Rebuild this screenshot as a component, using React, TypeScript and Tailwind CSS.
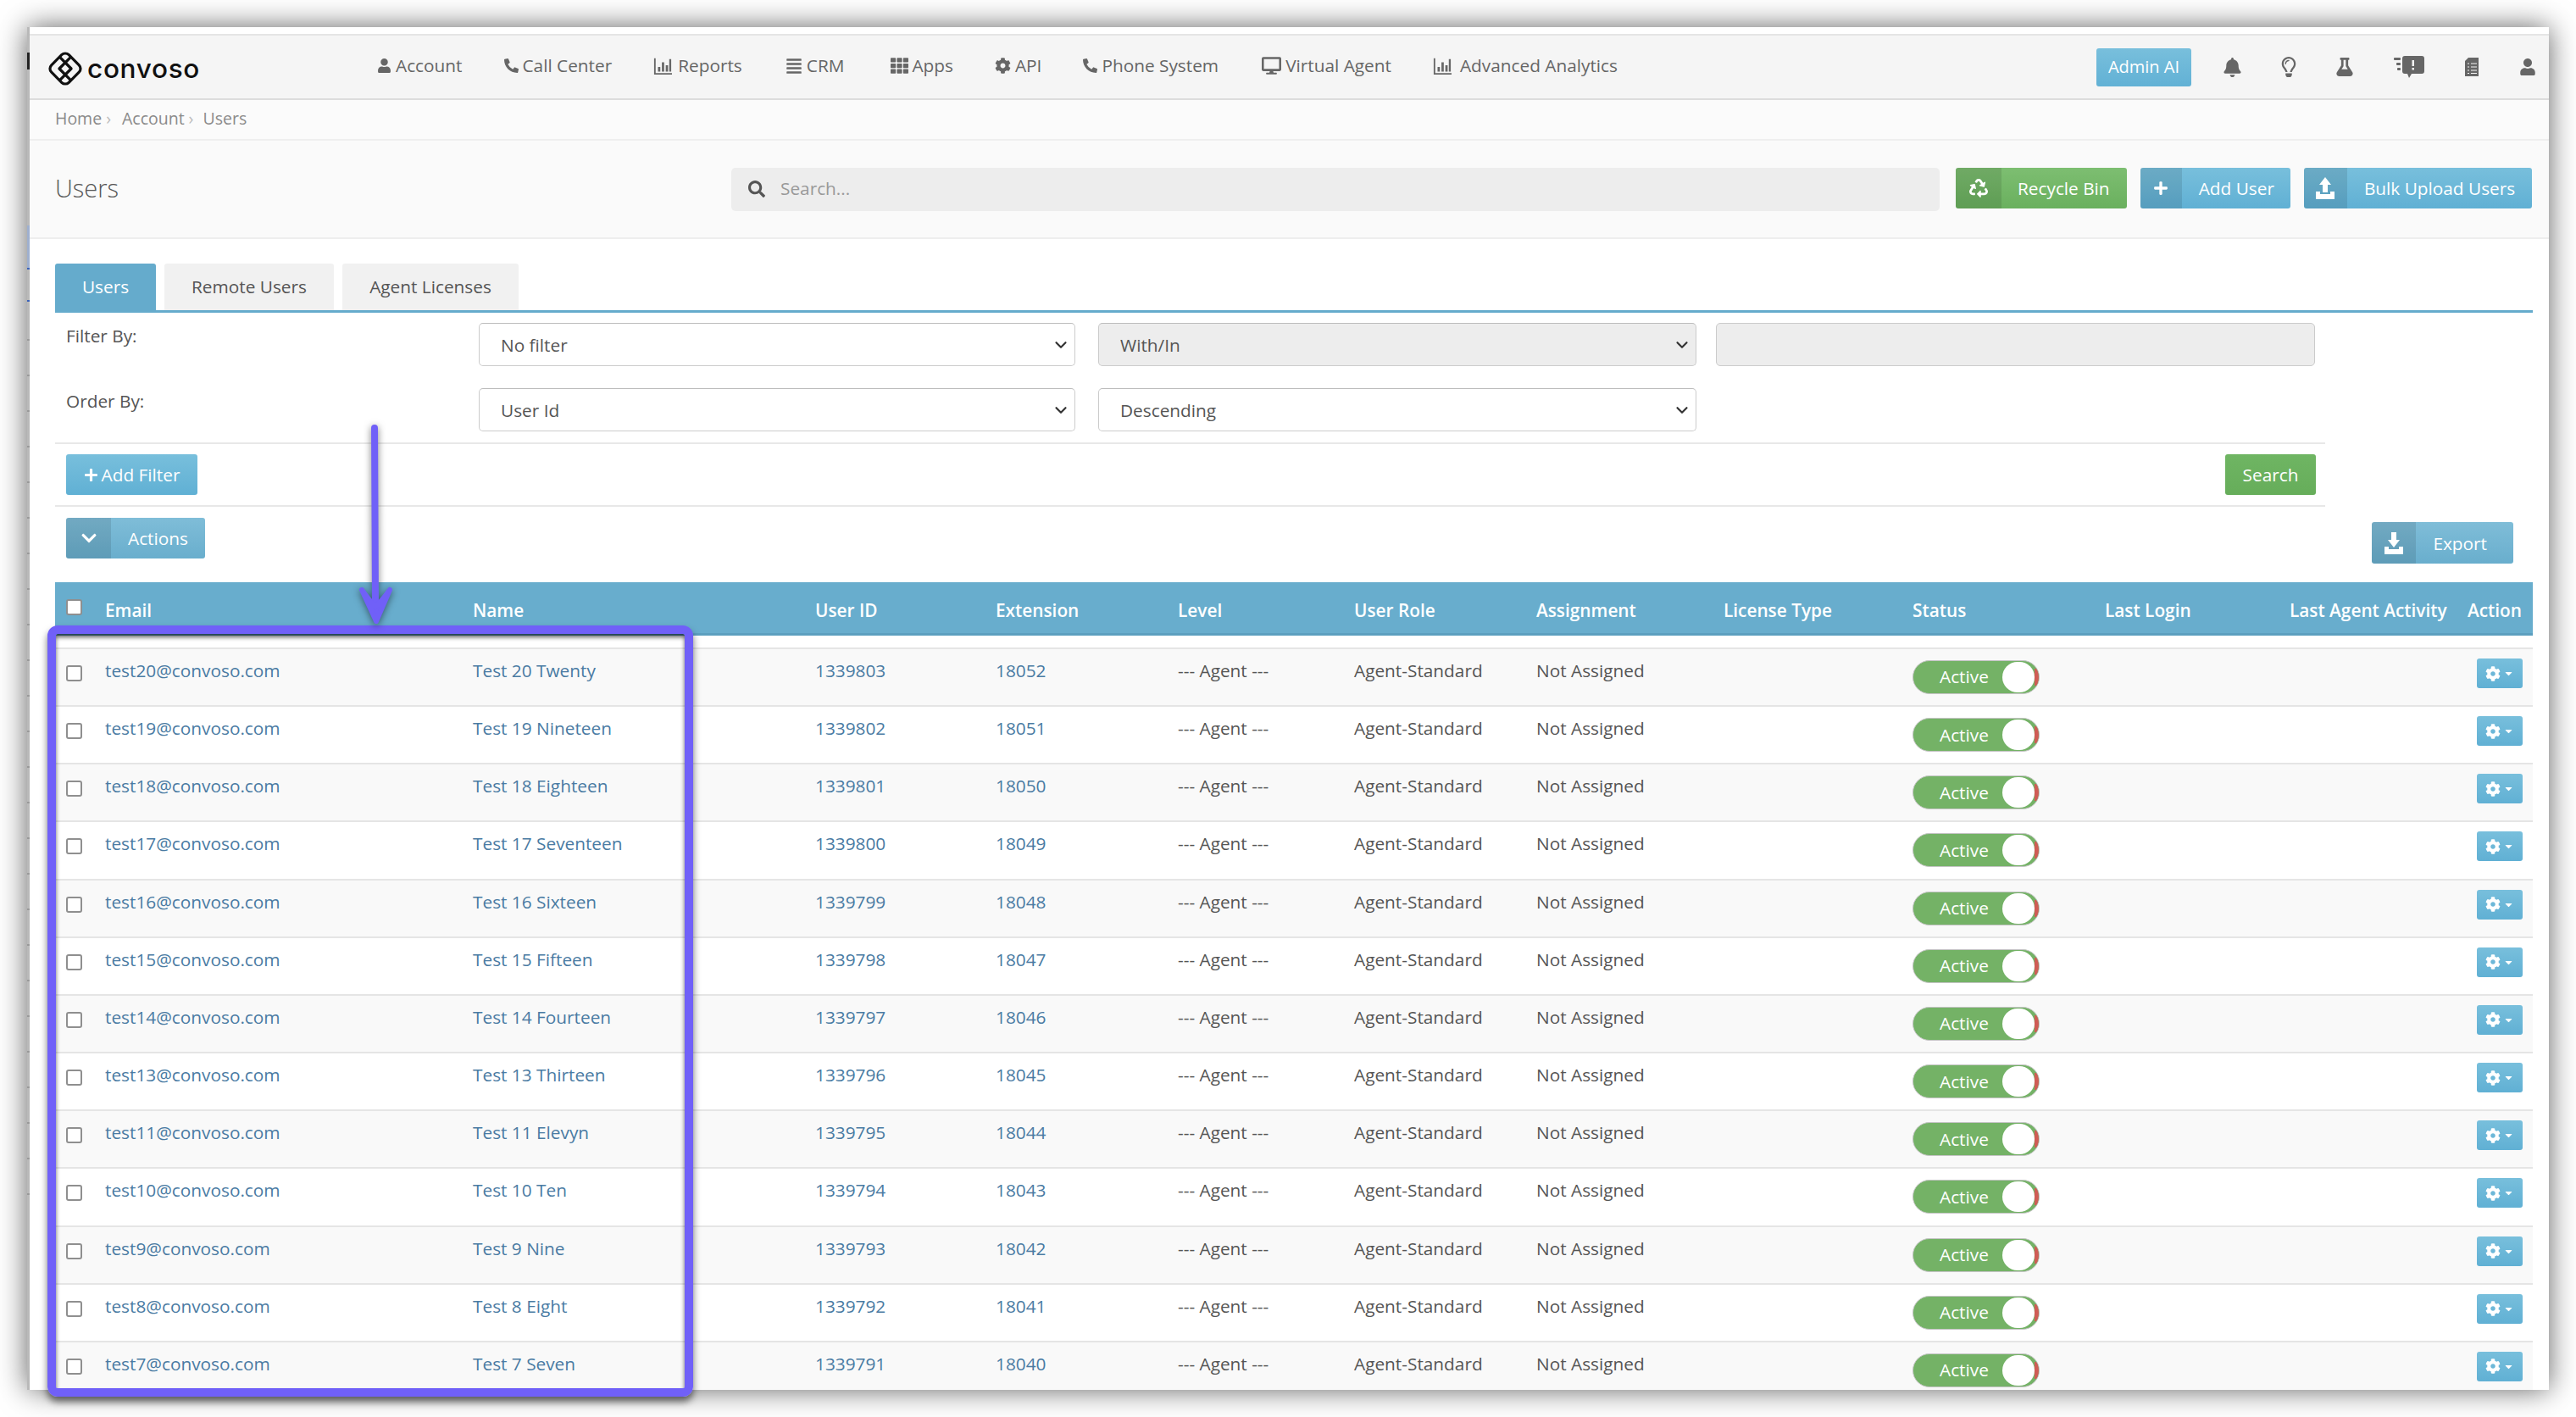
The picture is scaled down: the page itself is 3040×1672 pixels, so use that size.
import React from "react";
import { FaUser, FaPhoneAlt, FaAlignJustify, FaTh, FaCog, FaDesktop, FaBell, FaRegLightbulb, FaFlask, FaRecycle, FaPlus, FaChevronDown, FaCaretDown, FaSearch } from "react-icons/fa";
import { ChevronDown } from "lucide-react";

const grid = "grid grid-cols-[59px_434px_404px_213px_215px_208px_215px_221px_223px_227px_218px_210px_77px]";

const people: [string, string][] = [
  ["test20", "Test 20 Twenty"],
  ["test19", "Test 19 Nineteen"],
  ["test18", "Test 18 Eighteen"],
  ["test17", "Test 17 Seventeen"],
  ["test16", "Test 16 Sixteen"],
  ["test15", "Test 15 Fifteen"],
  ["test14", "Test 14 Fourteen"],
  ["test13", "Test 13 Thirteen"],
  ["test11", "Test 11 Elevyn"],
  ["test10", "Test 10 Ten"],
  ["test9", "Test 9 Nine"],
  ["test8", "Test 8 Eight"],
  ["test7", "Test 7 Seven"],
];

const headers = ["Email", "Name", "User ID", "Extension", "Level", "User Role", "Assignment", "License Type", "Status", "Last Login", "Last Agent Activity", "Action"];

function Bars({ size = 22 }: { size?: number }) {
  return (
    <svg width={size} height={size} viewBox="0 0 24 24" fill="currentColor">
      <path d="M1 2h2v19h21v2H1z" />
      <path d="M6 13h3v6H6zM11 7h3v12h-3zM16 11h3v8h-3zM20.5 3h2.5v16h-2.5z" />
    </svg>
  );
}

function Tray({ up }: { up: boolean }) {
  return (
    <svg width="22" height="28" viewBox="0 0 22 28" fill="currentColor">
      {up ? <path d="M11 1l7 9h-4v9H8v-9H4z" /> : <path d="M8 1h6v9h4l-7 9-7-9h4z" />}
      <path d="M0 18h5v3h12v-3h5v9H0z" />
    </svg>
  );
}

function Logo() {
  return (
    <svg width="40" height="40" viewBox="0 0 40 40" fill="none" stroke="#111" strokeWidth="3.2" strokeLinejoin="round">
      <g transform="rotate(45 20 20)">
        <rect x="5.5" y="5.5" width="29" height="29" rx="6" />
        <path d="M15 5.5V25h19.5M25 34.5V15H5.5" />
      </g>
    </svg>
  );
}

function Feedback() {
  return (
    <svg width="36" height="26" viewBox="0 0 36 26" fill="currentColor">
      <rect x="0" y="2" width="8" height="3" rx="1" />
      <rect x="3" y="8" width="5" height="3" rx="1" />
      <rect x="4" y="14" width="4" height="3" rx="1" />
      <path d="M13 0h20a3 3 0 013 3v15a3 3 0 01-3 3H21l-3 5-2-5h-3a3 3 0 01-3-3V3a3 3 0 013-3z" />
      <rect x="21.5" y="5" width="2.5" height="7" fill="#f5f5f5" />
      <rect x="21.5" y="14" width="2.5" height="2.5" fill="#f5f5f5" />
    </svg>
  );
}

function Checklist() {
  return (
    <svg width="16" height="22" viewBox="0 0 16 22">
      <path d="M4 0h12v22H0V4z" fill="currentColor" />
      <path d="M3 7h2M7 7h7M3 11h2M7 11h7M3 15h2M7 15h7M3 18.5h2M7 18.5h7" stroke="#f5f5f5" strokeWidth="1.2" />
    </svg>
  );
}

function NavItem({ icon, label, w, extra = "" }: { icon: React.ReactNode; label: string; w: string; extra?: string }) {
  return (
    <div className={`flex items-center gap-[3px] whitespace-nowrap ${extra}`}>
      <span className={`flex justify-start ${w}`}>{icon}</span>
      <span>{label}</span>
    </div>
  );
}

function IconButton({ icon, label, color, iconW, textPl, textPr, h }: { icon: React.ReactNode; label: string; color: string; iconW: string; textPl: string; textPr: string; h: string }) {
  return (
    <div className={`flex ${h} items-stretch overflow-hidden rounded-[3px] text-white ${color}`}>
      <span className={`flex items-center justify-center bg-black/10 ${iconW}`}>{icon}</span>
      <span className={`flex items-center whitespace-nowrap pt-[2px] ${textPl} ${textPr}`}>{label}</span>
    </div>
  );
}

function Select({ label, width, disabled }: { label: string; width: string; disabled?: boolean }) {
  return (
    <div className={`flex h-[51px] items-center justify-between rounded-[5px] border border-[#cbcbcb] border-t-[#bcbcbc] pl-[25px] pr-[5px] ${width} ${disabled ? "bg-[#ededed]" : "bg-white"}`}>
      <span className="pt-[2px]">{label}</span>
      <ChevronDown size={22} strokeWidth={2.4} color="#333" />
    </div>
  );
}

function Toggle() {
  return (
    <div className="relative flex h-[40px] w-[150px] items-center overflow-hidden rounded-full border border-[#c4c4c4] bg-[#74b266] pl-[31px] text-white">
      <span>Active</span>
      <span className="absolute right-[5px] top-[1px] h-[36px] w-[38px] rounded-full bg-white" />
      <span className="absolute right-0 top-[9px] h-[20px] w-[5px] bg-[#cf5c55]" />
    </div>
  );
}

function Row({ person, index }: { person: [string, string]; index: number }) {
  const [mail, name] = person;
  const link = "pt-[10px] text-[#4a7ba3]";
  const plain = "pt-[10px]";
  return (
    <div className={`${grid} h-[68.17px] shrink-0 border-t-2 border-[#e5e5e5] ${index % 2 === 0 ? "bg-[#f9f9f9]" : "bg-white"}`}>
      <div className="pl-[13px] pt-[19px]">
        <div className="h-[19px] w-[19px] rounded-[3px] border-2 border-[#8f8f8f] bg-white" />
      </div>
      <div className={link}>{mail}@convoso.com</div>
      <div className={link}>{name}</div>
      <div className={link}>{1339803 - index}</div>
      <div className={link}>{18052 - index}</div>
      <div className={plain}>--- Agent ---</div>
      <div className={plain}>Agent-Standard</div>
      <div className={plain}>Not Assigned</div>
      <div />
      <div className="pt-[13px]">
        <Toggle />
      </div>
      <div />
      <div />
      <div className="pl-[11px] pt-[11px]">
        <div className="flex h-[35px] w-[54px] items-center justify-center gap-[3px] rounded-[3px] bg-gradient-to-b from-[#78bfdc] to-[#60b0d4] text-white">
          <FaCog size={18} />
          <FaCaretDown size={13} />
        </div>
      </div>
    </div>
  );
}

export default function App() {
  return (
    <div className="relative h-[1672px] w-[3040px] overflow-hidden bg-white pl-[32px] pt-[32px] font-['Open_Sans',sans-serif] text-[20.8px] text-[#555]">
      <div className="flex h-[1608px] w-[2976px] shadow-[0_0_32px_rgba(0,0,0,0.62)]">
        <div className="flex h-full w-[3px] shrink-0 flex-col bg-[#b9b9b9]">
          <div className="mt-[30px] h-[20px] bg-[#222]" />
          <div className="mt-[184px] h-[50px] bg-[#9fb0cf]" />
          <div className="h-[2px] bg-[#3b62b8]" />
          <div className="mt-[36px] h-[2px] bg-[#3b62b8]" />
          <div className="mt-[4px] h-[1090px] bg-[repeating-linear-gradient(to_bottom,#b9b9b9_0,#b9b9b9_40px,#999_40px,#999_42px)]" />
        </div>

        <div className="flex h-full w-[2973px] flex-col overflow-hidden bg-white">
          <div className="h-[8px] shrink-0 bg-white" />
          <div className="h-[2px] shrink-0 bg-[#e5e5e5]" />

          <div className="flex h-[76px] shrink-0 items-center border-b-2 border-[#dcdcdc] bg-[#f5f5f5] text-[#666] shadow-[0_2px_3px_rgba(0,0,0,0.06)]">
            <div className="flex w-[410px] shrink-0 items-center gap-[6px] pl-[22px] pt-[4px]">
              <Logo />
              <span className="font-['Inter',sans-serif] text-[31.5px] font-medium tracking-[0.7px] text-[#111]">convoso</span>
            </div>
            <div className="flex items-center gap-[49px] pb-[3px]">
              <NavItem w="w-[19px]" icon={<FaUser size={17} />} label="Account" />
              <NavItem w="w-[19px]" icon={<FaPhoneAlt size={17} />} label="Call Center" />
              <NavItem w="w-[26px]" icon={<Bars />} label="Reports" extra="mr-[2px]" />
              <NavItem w="w-[22px]" icon={<FaAlignJustify size={20} />} label="CRM" extra="mr-[6px]" />
              <NavItem w="w-[22px]" icon={<FaTh size={21} />} label="Apps" />
              <NavItem w="w-[21px]" icon={<FaCog size={19} />} label="API" />
              <NavItem w="w-[19px]" icon={<FaPhoneAlt size={17} />} label="Phone System" extra="mr-[2px]" />
              <NavItem w="w-[25px]" icon={<FaDesktop size={23} />} label="Virtual Agent" />
              <NavItem w="w-[29px]" icon={<Bars />} label="Advanced Analytics" />
            </div>
            <div className="ml-auto flex items-center pr-[5px]">
              <div className="flex h-[45px] w-[112px] items-center justify-center rounded-[3px] bg-gradient-to-b from-[#78bfdc] to-[#62b1d5] text-[20px] text-white">Admin AI</div>
              <div className="ml-[28px] flex w-[40px] justify-center"><FaBell size={23} /></div>
              <div className="ml-[27px] flex w-[40px] justify-center"><FaRegLightbulb size={24} /></div>
              <div className="ml-[26px] flex w-[40px] justify-center"><FaFlask size={22} /></div>
              <div className="ml-[36px] flex w-[40px] justify-center"><Feedback /></div>
              <div className="ml-[34px] flex w-[40px] justify-center"><Checklist /></div>
              <div className="ml-[26px] flex w-[40px] justify-center"><FaUser size={20} /></div>
            </div>
          </div>

          <div className="flex h-[48px] shrink-0 items-center gap-[5px] border-b-2 border-[#efefef] bg-[#fbfbfb] pb-[2px] pl-[30px] text-[19.5px] text-[#8a8a8a]">
            <span>Home</span>
            <span className="mr-[8px] text-[#bbb]">›</span>
            <span>Account</span>
            <span className="mr-[6px] text-[#bbb]">›</span>
            <span>Users</span>
          </div>

          <div className="flex h-[116px] shrink-0 items-center border-b-2 border-[#eeeeee] bg-[#fafafa] pl-[30px]">
            <div className="w-[798px] pb-[2px] text-[29px] font-light text-[#555]">Users</div>
            <div className="flex h-[51px] w-[1426px] items-center gap-[18px] rounded-[5px] bg-[#ededed] pl-[20px] text-[#999]">
              <FaSearch size={20} className="text-[#555]" />
              <span>Search...</span>
            </div>
            <div className="ml-[19px] flex gap-[16px] pb-[3px]">
              <IconButton h="h-[48px]" icon={<FaRecycle size={22} />} label="Recycle Bin" color="bg-gradient-to-b from-[#7dbe71] to-[#6ab05e]" iconW="w-[54px]" textPl="pl-[19px]" textPr="pr-[20px]" />
              <IconButton h="h-[48px]" icon={<FaPlus size={18} />} label="Add User" color="bg-gradient-to-b from-[#78bfdc] to-[#60b0d4]" iconW="w-[49px]" textPl="pl-[20px]" textPr="pr-[19px]" />
              <IconButton h="h-[48px]" icon={<Tray up />} label="Bulk Upload Users" color="bg-gradient-to-b from-[#78bfdc] to-[#60b0d4]" iconW="w-[51px]" textPl="pl-[20px]" textPr="pr-[20px]" />
            </div>
          </div>

          <div className="ml-[30px] mt-[29px] flex h-[58px] w-[2924px] shrink-0 gap-[10px] border-b-[3px] border-[#65abcc]">
            <div className="flex h-[55px] w-[119px] items-center justify-center rounded-t-[3px] bg-[#65abcc] text-white">Users</div>
            <div className="flex h-[55px] w-[200px] items-center justify-center rounded-t-[3px] bg-[#f1f1f1]">Remote Users</div>
            <div className="flex h-[55px] w-[208px] items-center justify-center rounded-t-[3px] bg-[#f1f1f1]">Agent Licenses</div>
          </div>

          <div className="ml-[43px] mt-[12px] flex shrink-0 flex-col gap-[26px]">
            <div className="flex">
              <div className="w-[488px]">Filter By:</div>
              <div className="-ml-[1px] flex gap-[27px]">
                <Select label="No filter" width="w-[704px]" />
                <Select label="With/In" width="w-[706px]" disabled />
                <div className="-ml-[4px] h-[51px] w-[707px] rounded-[5px] border border-[#cbcbcb] bg-[#ededed]" />
              </div>
            </div>
            <div className="flex">
              <div className="w-[488px]">Order By:</div>
              <div className="-ml-[1px] flex gap-[27px]">
                <Select label="User Id" width="w-[704px]" />
                <Select label="Descending" width="w-[706px]" />
              </div>
            </div>
          </div>

          <div className="ml-[30px] mt-[13px] flex h-[76px] w-[2679px] shrink-0 items-center justify-between border-y-2 border-[#e8e8e8] pl-[13px] pr-[11px] text-white">
            <div className="flex h-[48px] w-[155px] items-center justify-center gap-[4px] rounded-[3px] bg-gradient-to-b from-[#78bfdc] to-[#60b0d4] pt-[1px]">
              <FaPlus size={17} />
              <span>Add Filter</span>
            </div>
            <div className="flex h-[48px] w-[107px] items-center justify-center rounded-[3px] bg-gradient-to-b from-[#6fb563] to-[#66ad5a] pt-[1px]">Search</div>
          </div>

          <div className="ml-[30px] mt-[13px] flex h-[54px] w-[2924px] shrink-0 items-start justify-between pl-[13px] pr-[23px]">
            <IconButton h="h-[48px]" icon={<FaChevronDown size={20} />} label="Actions" color="bg-gradient-to-b from-[#7fbdd8] to-[#69aecd]" iconW="w-[53px]" textPl="pl-[20px]" textPr="pr-[20px]" />
            <div className="mt-[5px]">
              <IconButton h="h-[49px]" icon={<Tray up={false} />} label="Export" color="bg-gradient-to-b from-[#7fbdd8] to-[#69aecd]" iconW="w-[52px]" textPl="pl-[20px]" textPr="pr-[31px]" />
            </div>
          </div>

          <div className="ml-[30px] mt-[22px] flex w-[2924px] flex-col">
            <div className={`${grid} h-[63px] shrink-0 border-b-[3px] border-[#5c9fbf] bg-[#68adcd] font-semibold text-white`}>
              <div className="pl-[13px] pt-[20px]">
                <div className="h-[19px] w-[19px] rounded-[3px] border-2 border-[#8f8f8f] bg-white" />
              </div>
              {headers.map((h) => (
                <div key={h} className="whitespace-nowrap pt-[18px]">{h}</div>
              ))}
            </div>
            <div className="h-[14px] shrink-0 bg-white" />
            {people.map((p, i) => (
              <Row key={p[0]} person={p} index={i} />
            ))}
          </div>
        </div>
      </div>

      <div className="absolute left-[56px] top-[738px] h-[910px] w-[762px] rounded-[12px] border-[10px] border-[#7060f8] shadow-[0_6px_8px_rgba(0,0,0,0.55),inset_0_4px_5px_rgba(0,0,0,0.6)]" />
      <svg className="absolute left-[405px] top-[495px] drop-shadow-[0_2px_4px_rgba(0,0,0,0.5)]" width="80" height="250" viewBox="405 495 80 250">
        <path d="M442 505L443 715" stroke="#7060f8" strokeWidth="8" strokeLinecap="round" fill="none" />
        <path d="M427 696Q437 710 443 716Q450 710 460 696L444 733Z" fill="#7060f8" stroke="#7060f8" strokeWidth="6" strokeLinejoin="round" />
      </svg>
    </div>
  );
}
